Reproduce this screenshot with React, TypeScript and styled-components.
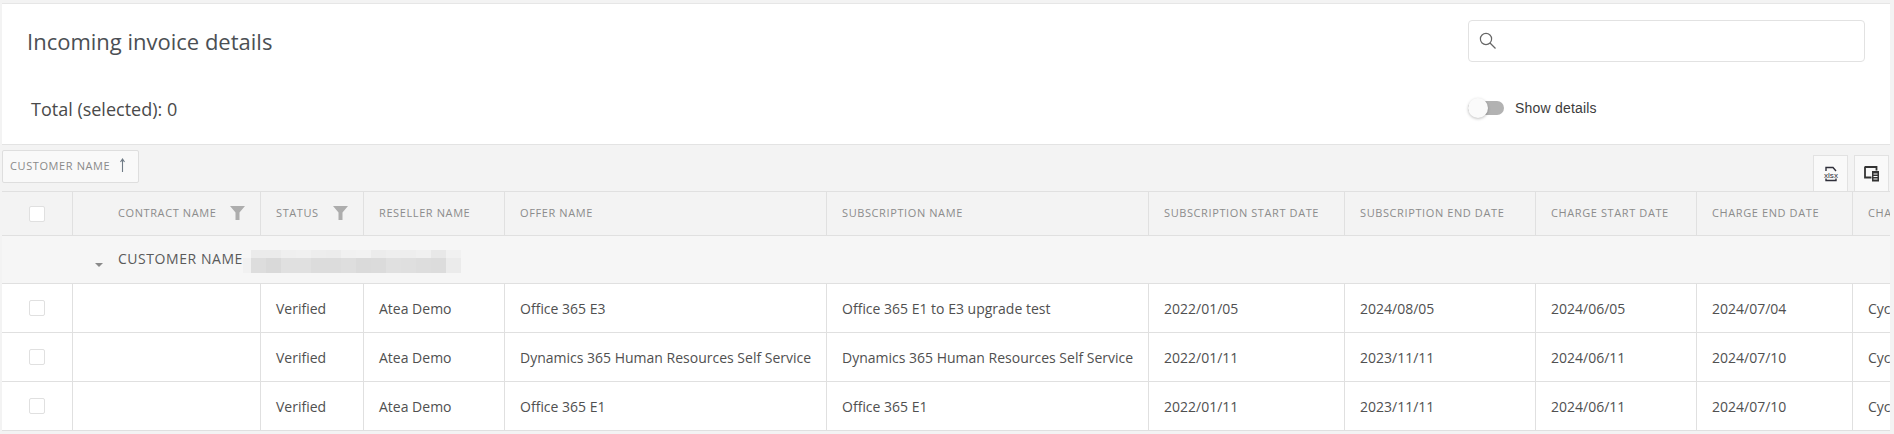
import React from "react";
import styled, { createGlobalStyle } from "styled-components";

const Global = createGlobalStyle`
  html, body { margin: 0; padding: 0; background: #f3f3f3; }
  body { font-family: "Open Sans", "Liberation Sans", sans-serif; color: #555; overflow: hidden; }
  * { box-sizing: border-box; }
`;

const COLS = "71px 188px 103px 141px 322px 322px 196px 191px 161px 156px 200px";

const Page = styled.div`
  width: 1894px;
  height: 434px;
  padding: 3px 4px 0 2px;
  overflow: hidden;
`;
const Frame = styled.div`
  width: 1888px;
  border-top: 1px solid #e6e6e6;
  overflow: hidden;
`;
const Head = styled.header`
  height: 141px;
  background: #fff;
  border-bottom: 1px solid #e3e3e3;
  display: flex;
  flex-direction: column;
`;
const HeadRow = styled.div<{ $h: number }>`
  height: ${(p) => p.$h}px;
  display: flex;
  align-items: center;
  justify-content: space-between;
`;
const Title = styled.h1`
  margin: 0 0 4px 25px;
  font-size: 22px;
  font-weight: 400;
  color: #4b4f54;
`;
const Total = styled.div`
  margin: 0 0 2px 29px;
  font-size: 18px;
  color: #4a4a4a;
`;
const Search = styled.div`
  width: 397px;
  height: 42px;
  margin: 0 25px 4px 0;
  border: 1px solid #e2e2e2;
  border-radius: 4px;
  display: flex;
  align-items: center;
  padding-left: 10px;
  color: #666;
`;
const ToggleBlock = styled.div`
  width: 397px;
  margin: 0 25px 4px 0;
  display: flex;
  align-items: center;
  gap: 11px;
`;
const Track = styled.div`
  position: relative;
  width: 36px;
  height: 14px;
  border-radius: 7px;
  background: #b2b2b2;
`;
const Knob = styled.div`
  position: absolute;
  left: 0;
  top: -3px;
  width: 20px;
  height: 20px;
  border-radius: 50%;
  background: #fafafa;
  box-shadow: 0 1px 3px rgba(0, 0, 0, 0.25);
`;
const ToggleLabel = styled.span`
  font-family: "Liberation Sans", Arial, sans-serif;
  font-size: 14px;
  letter-spacing: 0.2px;
  color: #3c3c3c;
`;
const Toolbar = styled.div`
  height: 46px;
  display: flex;
  justify-content: space-between;
  align-items: flex-end;
  padding-right: 1px;
`;
const Chip = styled.div`
  align-self: flex-start;
  margin-top: 5px;
  width: 137px;
  height: 33px;
  padding: 0 0 2px 7px;
  background: #f9f9f9;
  border: 1px solid #dedede;
  border-radius: 2px;
  display: flex;
  align-items: center;
  gap: 9px;
  font-size: 11px;
  letter-spacing: 0.6px;
  color: #8a8a8a;
`;
const Actions = styled.div`
  display: flex;
  gap: 6px;
`;
const IconButton = styled.button`
  width: 35px;
  height: 36px;
  padding: 0;
  background: #f9f9f9;
  border: 1px solid #e2e2e2;
  border-bottom: 0;
  display: flex;
  align-items: center;
  justify-content: center;
`;
const Row = styled.div<{ $head?: boolean }>`
  display: grid;
  grid-template-columns: ${COLS};
  width: 2051px;
  height: ${(p) => (p.$head ? 45 : 49)}px;
  background: ${(p) => (p.$head ? "#f3f3f3" : "#fff")};
  border-bottom: 1px solid #e0e0e0;
  ${(p) => (p.$head ? "border-top: 1px solid #e0e0e0;" : "")}
`;
const Cell = styled.div<{ $indent?: number }>`
  display: flex;
  align-items: center;
  justify-content: space-between;
  padding: 0 15px 0 ${(p) => p.$indent ?? 15}px;
  border-right: 1px solid #e0e0e0;
  font-size: 14px;
  color: #505050;
  white-space: nowrap;
  overflow: hidden;
`;
const HeadCell = styled(Cell)`
  font-size: 11px;
  letter-spacing: 0.6px;
  color: #8c8c8c;
  text-transform: uppercase;
  padding-bottom: 2px;
`;
const CheckCell = styled(Cell)`
  padding: 0 0 0 27px;
  justify-content: flex-start;
`;
const Check = styled.span`
  width: 16px;
  height: 16px;
  display: block;
  border: 1px solid #e0e0e0;
  border-radius: 2px;
  background: #fff;
`;
const GroupRow = styled.div`
  height: 48px;
  background: #f6f6f6;
  border-bottom: 1px solid #e0e0e0;
  display: flex;
  align-items: center;
  padding-left: 93px;
`;
const GroupLabel = styled.span`
  margin: 0 0 3px 15px;
  font-size: 14px;
  letter-spacing: 0.55px;
  color: #5a5a5a;
`;
const Mosaic = styled.svg`
  display: block;
  margin: 3px 0 0 0;
`;

const Funnel = () => (
  <svg width="15" height="14" viewBox="0 0 15 14">
    <path d="M0 0h15L9.5 6.5V14h-4V6.5z" fill="#adadad" />
  </svg>
);
const Caret = () => (
  <svg width="8" height="8" viewBox="0 0 8 8" style={{ marginTop: 8 }}>
    <path d="M0 3h8L4 7z" fill="#8a8a8a" />
  </svg>
);
const UpArrow = () => (
  <svg width="7" height="15" viewBox="0 0 7 15">
    <path d="M3.5 1v13M1.5 4l2-3 2 3" stroke="#6f7b86" fill="none" strokeWidth="1.1" />
  </svg>
);
const SearchIcon = () => (
  <svg width="18" height="18" viewBox="0 0 18 18" fill="none" stroke="#666" strokeWidth="1.2">
    <circle cx="7" cy="7" r="5.6" />
    <path d="M11 11l5.5 5.5" />
  </svg>
);
const XlsxIcon = () => (
  <svg width="16" height="16" viewBox="0 0 16 16">
    <path d="M3 5V1.5h7L13 5M13 12.5v2H3v-2" fill="none" stroke="#2f2f3a" strokeWidth="1.4" />
    <text x="1" y="11.5" fontSize="8" textLength="14" lengthAdjust="spacingAndGlyphs" fontFamily="Liberation Sans, sans-serif" fill="#2f2f3a">
      xlsx
    </text>
  </svg>
);
const CopyIcon = () => (
  <svg width="16" height="16" viewBox="0 0 16 16">
    <path d="M1 1h11.5v3.5M1 .5v11h6.5" fill="none" stroke="#333" strokeWidth="1.8" />
    <rect x="8" y="5" width="7" height="10.5" fill="#333" />
    <path d="M9.5 8h4M9.5 10.5h4M9.5 13h4" stroke="#fff" strokeWidth="1" />
  </svg>
);

const topTones = ["#ebebeb", "#ebebeb", "#efefef", "#f0f0f0", "#ededed", "#ececec", "#f1f1f1", "#f2f2f2", "#ececec", "#eeeeee", "#eeeeee", "#f0f0f0", "#e8e8e8", "#f1f1f1"];
const lowTones = ["#dddddd", "#d9d9d9", "#e0e0e0", "#e0e0e0", "#dcdcdc", "#dcdcdc", "#dedede", "#dadada", "#dbdbdb", "#e0e0e0", "#dfdfdf", "#dddddd", "#dcdcdc", "#ebebeb"];

const BlurredName = () => (
  <Mosaic width="218" height="23" viewBox="0 0 218 23">
    <rect x="0" y="8" width="8" height="15" fill="#f1f1f1" />
    {topTones.map((c, i) => (
      <rect key={`t${i}`} x={8 + i * 15} y="0" width="15" height="8" fill={c} />
    ))}
    {lowTones.map((c, i) => (
      <rect key={`l${i}`} x={8 + i * 15} y="8" width="15" height="15" fill={c} />
    ))}
  </Mosaic>
);

const rows = [
  ["Office 365 E3", "Office 365 E1 to E3 upgrade test", "2022/01/05", "2024/08/05", "2024/06/05", "2024/07/04"],
  ["Dynamics 365 Human Resources Self Service", "Dynamics 365 Human Resources Self Service", "2022/01/11", "2023/11/11", "2024/06/11", "2024/07/10"],
  ["Office 365 E1", "Office 365 E1", "2022/01/11", "2023/11/11", "2024/06/11", "2024/07/10"],
];

const plainHeads = ["Offer name", "Subscription name", "Subscription start date", "Subscription end date", "Charge start date", "Charge end date", "Charge type"];

export default function App() {
  return (
    <Page>
      <Global />
      <Frame>
        <Head>
          <HeadRow $h={78}>
            <Title>Incoming invoice details</Title>
            <Search>
              <SearchIcon />
            </Search>
          </HeadRow>
          <HeadRow $h={56}>
            <Total>Total (selected): 0</Total>
            <ToggleBlock>
              <Track>
                <Knob />
              </Track>
              <ToggleLabel>Show details</ToggleLabel>
            </ToggleBlock>
          </HeadRow>
        </Head>
        <Toolbar>
          <Chip>
            CUSTOMER NAME
            <UpArrow />
          </Chip>
          <Actions>
            <IconButton>
              <XlsxIcon />
            </IconButton>
            <IconButton>
              <CopyIcon />
            </IconButton>
          </Actions>
        </Toolbar>
        <Row $head>
          <CheckCell>
            <Check />
          </CheckCell>
          <HeadCell $indent={45}>
            Contract name
            <Funnel />
          </HeadCell>
          <HeadCell>
            Status
            <Funnel />
          </HeadCell>
          <HeadCell>Reseller name</HeadCell>
          {plainHeads.map((h) => (
            <HeadCell key={h}>{h}</HeadCell>
          ))}
        </Row>
        <GroupRow>
          <Caret />
          <GroupLabel>CUSTOMER NAME</GroupLabel>
          <BlurredName />
        </GroupRow>
        {rows.map((r, i) => (
          <Row key={i}>
            <CheckCell>
              <Check />
            </CheckCell>
            <Cell />
            <Cell>Verified</Cell>
            <Cell>Atea Demo</Cell>
            {r.map((v, j) => (
              <Cell key={j}>{v}</Cell>
            ))}
            <Cell>Cycle fee</Cell>
          </Row>
        ))}
      </Frame>
    </Page>
  );
}
